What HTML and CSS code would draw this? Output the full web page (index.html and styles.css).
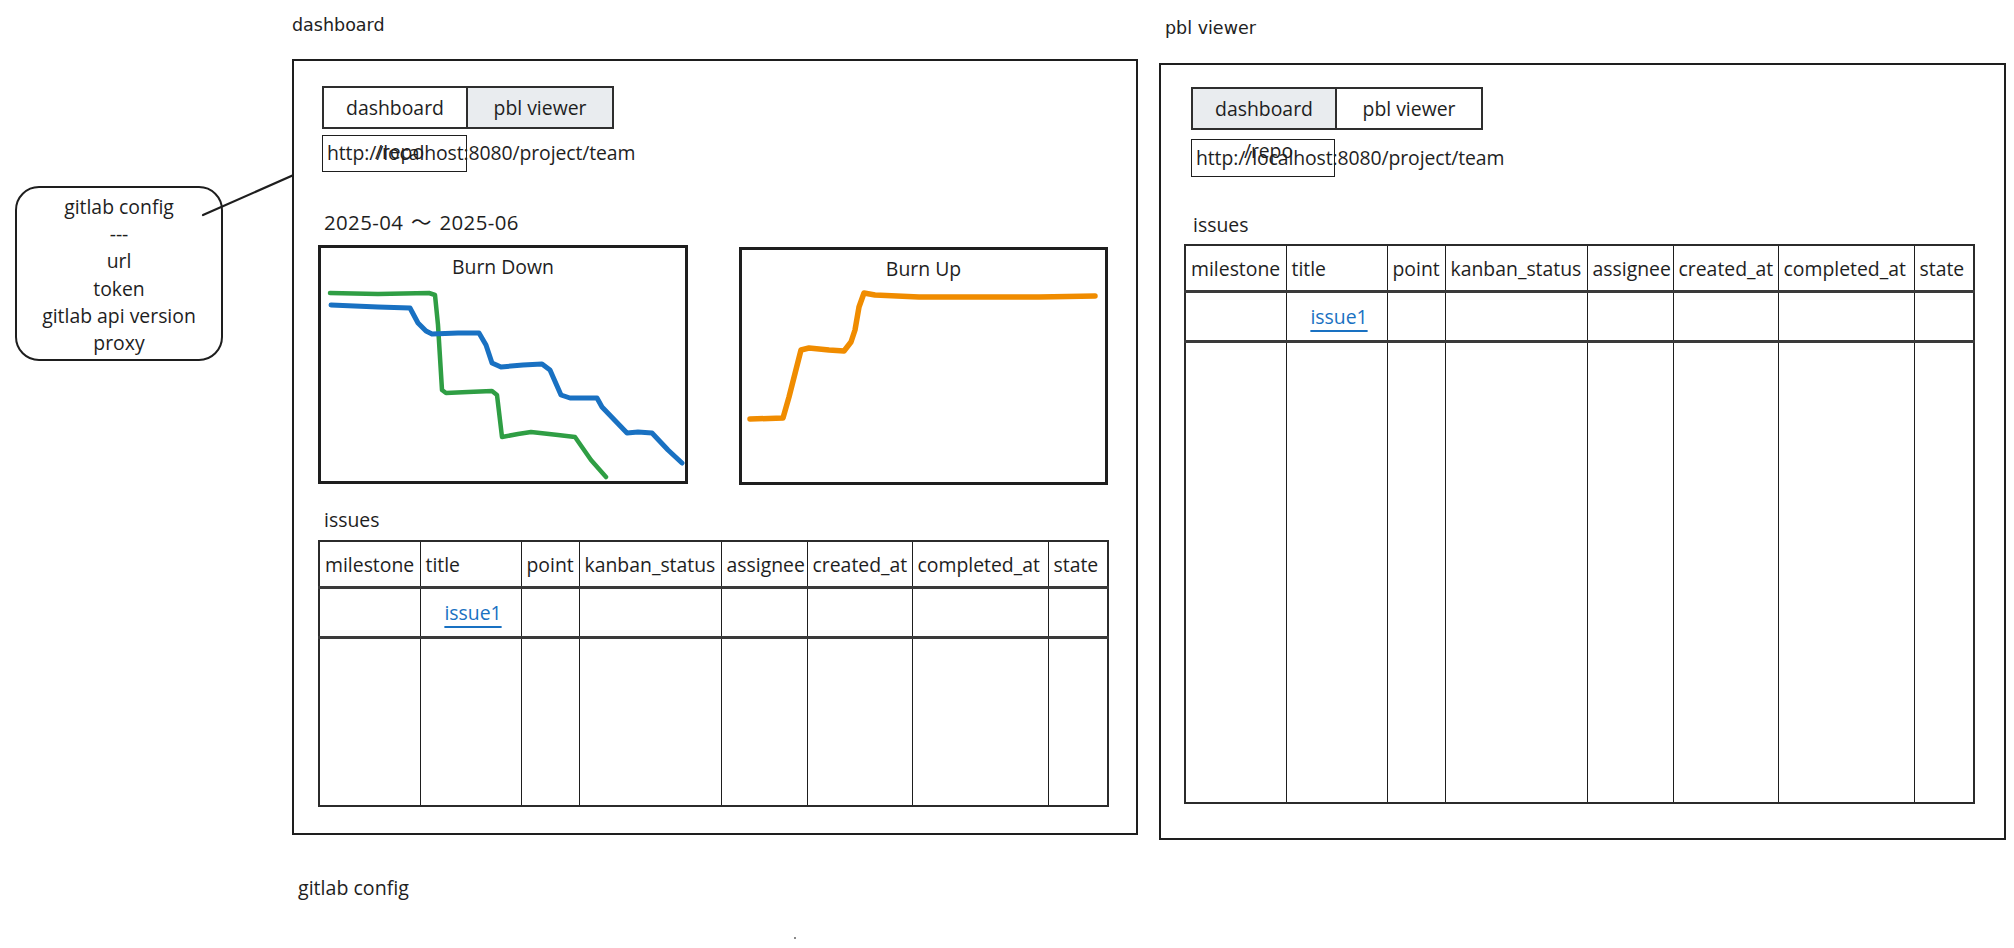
FILE: index.html
```html
<!DOCTYPE html>
<html lang="ja">
<head>
<meta charset="utf-8">
<title>pbl viewer wireframe</title>
<link rel="stylesheet" href="styles.css">
</head>
<body>
<div class="board">
  <div class="label label--dash">dashboard</div>
  <div class="label label--pbl">pbl viewer</div>
  <div class="label label--config">gitlab config</div>
  <span class="speck"></span>

  <div class="note">
    <div>gitlab config</div>
    <div>---</div>
    <div>url</div>
    <div>token</div>
    <div>gitlab api version</div>
    <div>proxy</div>
  </div>
  <svg class="connector" viewBox="0 0 340 240" aria-hidden="true">
    <line x1="203" y1="215" x2="323" y2="162"/>
  </svg>

  <section class="frame frame--dash">
    <div class="tabs">
      <div class="tab">dashboard</div>
      <div class="tab tab--muted">pbl viewer</div>
    </div>
    <div class="url"><span class="url-text">http://localhost:8080/project/team</span><span class="url-overlay">/repo</span></div>
    <div class="period">2025-04 〜 2025-06</div>
    <div class="charts">
      <div class="chart chart--down">
        <div class="chart-title">Burn Down</div>
        <svg class="chart-lines" viewBox="0 0 370 239" aria-hidden="true">
          <polyline class="ln ln--green" points="12,48 60,49 111,48 117,50 120,80 124,145 128,148 150,147 174,146 179,150 184,192 200,189 213,187 240,190 257,192 273,215 288,232"/>
          <polyline class="ln ln--blue" points="13,60 60,62 92,63 100,78 108,86 114,89 140,88 161,88 168,100 174,118 183,122 205,120 224,119 232,125 243,150 252,153 279,153 284,162 309,188 320,187 334,188 350,205 364,218"/>
        </svg>
      </div>
      <div class="chart chart--up">
        <div class="chart-title">Burn Up</div>
        <svg class="chart-lines" viewBox="0 0 369 238" aria-hidden="true">
          <polyline class="ln ln--orange" points="11,172 44,171 50,150 62,103 70,101 90,103 105,104 112,95 116,83 120,60 125,46 136,48 180,50 221,50 300,50 356,49"/>
        </svg>
      </div>
    </div>
    <div class="section-title">issues</div>
    <table class="issues issues--dash">
      <colgroup>
        <col class="col-milestone"><col class="col-title"><col class="col-point"><col class="col-kanban">
        <col class="col-assignee"><col class="col-created"><col class="col-completed"><col class="col-state">
      </colgroup>
      <thead>
        <tr><th>milestone</th><th>title</th><th>point</th><th>kanban_status</th><th>assignee</th><th>created_at</th><th>completed_at</th><th>state</th></tr>
      </thead>
      <tbody>
        <tr class="row-data"><td></td><td class="cell-title"><a class="issue-link" href="#">issue1</a></td><td></td><td></td><td></td><td></td><td></td><td></td></tr>
        <tr class="row-fill"><td></td><td></td><td></td><td></td><td></td><td></td><td></td><td></td></tr>
      </tbody>
    </table>
  </section>

  <section class="frame frame--pbl">
    <div class="tabs">
      <div class="tab tab--muted">dashboard</div>
      <div class="tab">pbl viewer</div>
    </div>
    <div class="url"><span class="url-text">http://localhost:8080/project/team</span><span class="url-overlay">/repo</span></div>
    <div class="section-title">issues</div>
    <table class="issues issues--pbl">
      <colgroup>
        <col class="col-milestone"><col class="col-title"><col class="col-point"><col class="col-kanban">
        <col class="col-assignee"><col class="col-created"><col class="col-completed"><col class="col-state">
      </colgroup>
      <thead>
        <tr><th>milestone</th><th>title</th><th>point</th><th>kanban_status</th><th>assignee</th><th>created_at</th><th>completed_at</th><th>state</th></tr>
      </thead>
      <tbody>
        <tr class="row-data"><td></td><td class="cell-title"><a class="issue-link" href="#">issue1</a></td><td></td><td></td><td></td><td></td><td></td><td></td></tr>
        <tr class="row-fill"><td></td><td></td><td></td><td></td><td></td><td></td><td></td><td></td></tr>
      </tbody>
    </table>
  </section>
</div>
</body>
</html>
```

FILE: styles.css
```css
html, body {
  margin: 0;
  padding: 0;
  background: #ffffff;
}

body {
  font-family: "Open Sans", "Noto Sans", "Noto Sans CJK JP", sans-serif;
  font-size: 19.4px;
  color: #1e1e1e;
}

.board {
  position: relative;
  width: 2014px;
  height: 948px;
  overflow: hidden;
}

/* free-canvas labels */
.label {
  position: absolute;
  font-family: "DejaVu Sans", sans-serif;
  font-size: 17.5px;
  line-height: 20px;
  color: #222222;
  white-space: nowrap;
}

.label--dash {
  left: 292px;
  top: 15px;
}

.label--pbl {
  left: 1165px;
  top: 18px;
}

.label--config {
  left: 298px;
  top: 874px;
  font-family: "Open Sans", "Noto Sans", sans-serif;
  font-size: 19.6px;
  line-height: 27px;
  color: #1e1e1e;
}

.speck {
  position: absolute;
  left: 794px;
  top: 937px;
  width: 2px;
  height: 2px;
  background: #8a8a8a;
}

/* sticky note */
.note {
  position: absolute;
  left: 15px;
  top: 186px;
  width: 208px;
  height: 175px;
  box-sizing: border-box;
  border: 2px solid #1e1e1e;
  border-radius: 24px;
  padding-top: 5px;
  text-align: center;
  line-height: 27.2px;
  white-space: nowrap;
}

.connector {
  position: absolute;
  left: 0;
  top: 0;
  width: 340px;
  height: 240px;
  overflow: visible;
  pointer-events: none;
}

.connector line {
  stroke: #1e1e1e;
  stroke-width: 2.2;
  stroke-linecap: round;
}

/* frames (windows on the canvas) */
.frame {
  position: absolute;
  box-sizing: border-box;
  border: 2px solid #1e1e1e;
  display: flex;
  flex-direction: column;
  align-items: flex-start;
  background: #ffffff;
}

.frame--dash {
  left: 292px;
  top: 59px;
  width: 846px;
  height: 776px;
  padding: 25px 0 0 24px;
}

.frame--pbl {
  left: 1159px;
  top: 63px;
  width: 847px;
  height: 777px;
  padding: 22px 0 0 23px;
}

/* tabs */
.tabs {
  display: flex;
  margin-left: 4px;
}

.frame--pbl .tabs {
  margin-left: 7px;
}

.tab {
  box-sizing: border-box;
  width: 146px;
  height: 43px;
  border: 2px solid #2e2e2e;
  display: flex;
  align-items: center;
  justify-content: center;
  background: #ffffff;
  white-space: nowrap;
}

.tab + .tab {
  margin-left: -2px;
  width: 148px;
}

.tab--muted {
  background: #e9ecef;
}

/* url field */
.url {
  position: relative;
  box-sizing: border-box;
  width: 145px;
  height: 37px;
  border: 1.5px solid #1e1e1e;
  margin: 6px 0 0 4px;
  line-height: 34px;
  white-space: nowrap;
  letter-spacing: -0.1px;
}

.frame--pbl .url {
  margin: 9px 0 0 7px;
  width: 144px;
  height: 38px;
  line-height: 36px;
}

.url-text {
  padding-left: 4px;
}

.url-overlay {
  position: absolute;
  left: 52px;
  top: -1px;
}

.frame--pbl .url-overlay {
  top: -7px;
}

.period {
  margin: 37px 0 0 6px;
  line-height: 27px;
  font-size: 20.4px;
  letter-spacing: 0.4px;
  word-spacing: 2px;
  white-space: nowrap;
}

/* charts */
.charts {
  display: flex;
  align-items: flex-start;
  gap: 51px;
  margin-top: 9px;
}

.chart {
  position: relative;
  box-sizing: border-box;
  border: 3px solid #1e1e1e;
  width: 370px;
  height: 239px;
  text-align: center;
}

.chart--up {
  width: 369px;
  height: 238px;
  margin-top: 2px;
}

.chart-title {
  padding-top: 5px;
  line-height: 27px;
}

.chart-lines {
  position: absolute;
  left: -3px;
  top: -3px;
  width: calc(100% + 6px);
  height: calc(100% + 6px);
  overflow: visible;
}

.ln {
  fill: none;
  stroke-linecap: round;
  stroke-linejoin: round;
}

.ln--green {
  stroke: #2f9e44;
  stroke-width: 4.5;
}

.ln--blue {
  stroke: #1971c2;
  stroke-width: 5;
}

.ln--orange {
  stroke: #f08c00;
  stroke-width: 5.5;
}

.section-title {
  margin: 21px 0 0 6px;
  line-height: 27px;
}

.frame--pbl .section-title {
  margin: 34px 0 0 9px;
}

/* issues table */
.issues {
  border-collapse: collapse;
  table-layout: fixed;
  width: 789px;
  margin-top: 7px;
  border: 2px solid #2b2b2b;
}

.frame--pbl .issues {
  margin-top: 6px;
}

.issues--dash {
  height: 267px;
}

.issues--pbl {
  height: 560px;
}

.col-milestone { width: 101px; }
.col-title { width: 101px; }
.col-point { width: 58px; }
.col-kanban { width: 142px; }
.col-assignee { width: 86px; }
.col-created { width: 105px; }
.col-completed { width: 136px; }
.col-state { width: 60px; }

.issues th,
.issues td {
  border-left: 1px solid #1e1e1e;
  padding: 0 0 0 5px;
  white-space: nowrap;
  overflow: visible;
}

.issues th {
  font-weight: 400;
  text-align: left;
  height: 44px;
  vertical-align: middle;
  border-bottom: 3px solid #3a3a3a;
}

.row-data td {
  height: 47px;
  border-bottom: 3px solid #3a3a3a;
  vertical-align: middle;
}

.cell-title {
  text-align: center;
}

.issue-link {
  color: #1971c2;
  text-decoration: underline;
  text-decoration-thickness: 2px;
  text-underline-offset: 6px;
}
```
